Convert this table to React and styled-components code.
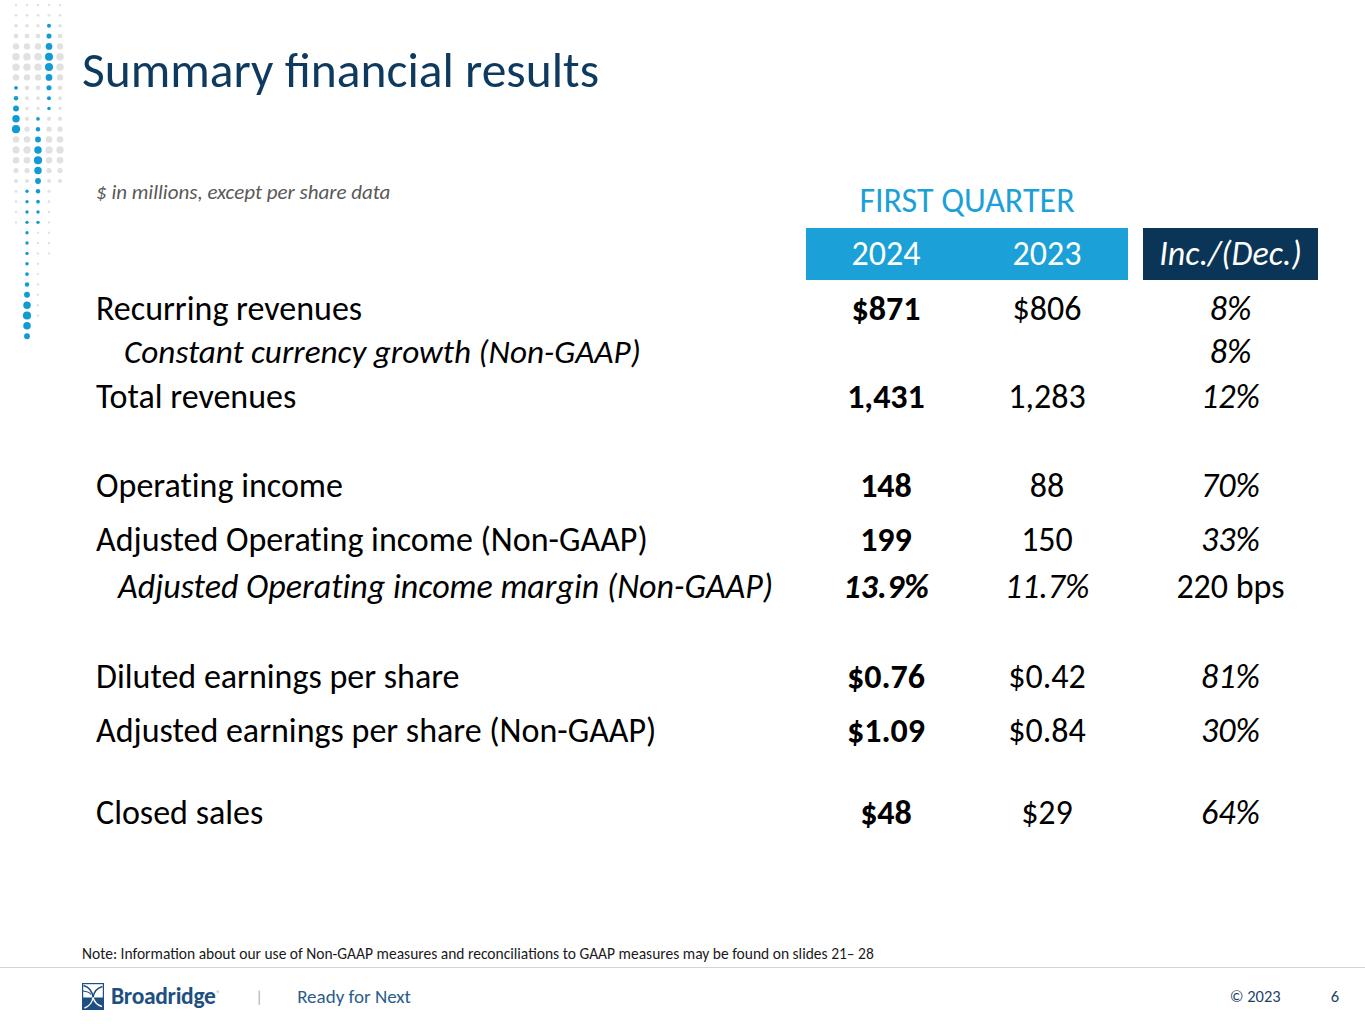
import React from "react";
import styled, { createGlobalStyle } from "styled-components";

const GlobalStyle = createGlobalStyle`
  html, body {
    margin: 0;
    padding: 0;
    background: #fff;
  }
  body {
    font-family: Carlito, Lato, "Open Sans", sans-serif;
    color: #000;
  }
`;

const NAVY = "#0d3a5e";
const BLUE = "#1ba0d8";

// decorative dot column pattern at the top left
const dotColumns = [
  { x: 16, segs: [[0, 7, "g"], [8, 12, "b", 12], [13, 21, "g"]] },
  { x: 27, segs: [[0, 17, "g"], [18, 32, "b", 30]] },
  { x: 38, segs: [[0, 10, "g"], [11, 21, "b", 15], [22, 30, "g"]] },
  { x: 49, segs: [[0, 1, "g"], [2, 10, "b", 5.5], [11, 24, "g"]] },
  { x: 60, segs: [[0, 17, "g"]] },
];

const grayRadius = (i) =>
  1.2 + 2.6 * Math.exp(-((i - 5.5) ** 2) / 8) + 2.4 * Math.exp(-((i - 14) ** 2) / 8);

const blueRadius = (i, peak) => 1.7 + 2.4 * Math.exp(-((i - peak) ** 2) / 6);

const Dots = () => {
  const dots = [];
  dotColumns.forEach((col) => {
    col.segs.forEach(([from, to, kind, peak]) => {
      for (let i = from; i <= to; i++) {
        const y = 5 + i * 10.35;
        const r = kind === "b" ? blueRadius(i, peak) : Math.min(grayRadius(i), 3.8);
        dots.push(
          <circle
            key={`${col.x}-${i}`}
            cx={col.x}
            cy={y}
            r={r}
            fill={kind === "b" ? "#119bd4" : "#e1e1e1"}
          />
        );
      }
    });
  });
  return (
    <svg width="70" height="345" viewBox="0 0 70 345">
      {dots}
    </svg>
  );
};

const BroadridgeMark = () => (
  <svg width="22" height="27" viewBox="0 0 22 27">
    <rect x="0.6" y="0.6" width="20.8" height="25.8" fill="#fff" stroke="#1d4f80" strokeWidth="1.2" />
    <rect x="0" y="14.5" width="22" height="12.5" fill="#1d4f80" />
    <path d="M1.5 2.5 Q10 5, 11 14.5" fill="none" stroke="#1d4f80" strokeWidth="1.5" />
    <path d="M20.5 3.5 Q12 6, 11 14.5" fill="none" stroke="#1d4f80" strokeWidth="1.5" />
    <path d="M1 8 Q7 8.5, 9 11.5" fill="none" stroke="#1d4f80" strokeWidth="1.1" />
    <path d="M11 14.5 Q10 22, 2.5 25" fill="none" stroke="#fff" strokeWidth="1.4" />
    <path d="M11 14.5 Q13 21.5, 20 23.5" fill="none" stroke="#fff" strokeWidth="1.4" />
  </svg>
);

const Slide = styled.div`
  width: 1365px;
  height: 1024px;
  display: flex;
  flex-direction: column;
  overflow: hidden;
  background: #fff;
`;

const Body = styled.div`
  height: 967px;
  display: flex;
`;

const Gutter = styled.div`
  width: 82px;
  flex: none;
  display: flex;
  align-items: flex-start;
`;

const Main = styled.div`
  flex: 1;
  display: flex;
  flex-direction: column;
`;

const Title = styled.h1`
  margin: 40px 0 0;
  font-size: 49.5px;
  line-height: 60px;
  font-weight: 400;
  color: ${NAVY};
`;

const Grid = styled.div`
  display: grid;
  grid-template-columns: 724px 160px 162px 15px 175px;
  align-items: center;
  margin-top: ${(p) => p.$top || 0}px;
  height: ${(p) => p.$h || 40}px;
`;

const Caption = styled.div`
  align-self: start;
  margin-top: 10px;
  padding-left: 14px;
  font-size: 21px;
  line-height: 24px;
  font-style: italic;
  color: #595959;
`;

const QuarterLabel = styled.div`
  grid-column: 2 / 4;
  text-align: center;
  margin-top: 4px;
  font-size: 34px;
  line-height: 38px;
  color: ${BLUE};
`;

const BandBlue = styled.div`
  grid-column: 2 / 4;
  height: 100%;
  display: grid;
  grid-template-columns: 160px 162px;
  align-items: center;
  background: ${BLUE};
`;

const BandDark = styled.div`
  grid-column: 5;
  height: 100%;
  display: flex;
  align-items: center;
  justify-content: center;
  background: #0b3556;
`;

const BandText = styled.span`
  text-align: center;
  font-size: 34px;
  line-height: 40px;
  color: #fff;
  font-style: ${(p) => (p.$italic ? "italic" : "normal")};
`;

const Label = styled.div`
  padding-left: ${(p) => 14 + (p.$indent || 0)}px;
  font-size: ${(p) => p.$size || 34}px;
  line-height: 40px;
  font-style: ${(p) => (p.$italic ? "italic" : "normal")};
  font-variant-ligatures: no-common-ligatures;
  white-space: nowrap;
`;

const Value = styled.div`
  grid-column: ${(p) => p.$col};
  text-align: center;
  font-size: 34px;
  line-height: 40px;
  font-weight: ${(p) => (p.$bold ? 700 : 400)};
  font-style: ${(p) => (p.$italic ? "italic" : "normal")};
  white-space: nowrap;
`;

const Spacer = styled.div`
  flex: 1;
`;

const Note = styled.div`
  margin-bottom: 3px;
  font-size: 15.5px;
  line-height: 20px;
  color: #1a1a1a;
`;

const Footer = styled.footer`
  flex: 1;
  display: flex;
  align-items: center;
  padding: 0 26px 0 82px;
  border-top: 1.5px solid #d4d4d4;
`;

const Brand = styled.div`
  display: flex;
  align-items: center;
  gap: 7px;
  color: #1d4f80;
  font-size: 23.5px;
  font-weight: 700;
  letter-spacing: -0.3px;
`;

const Reg = styled.sup`
  font-size: 6px;
  font-weight: 400;
  margin-left: 1px;
`;

const Divider = styled.span`
  margin: 0 34px 0 36px;
  color: #b5b5b5;
  font-size: 17px;
  font-weight: 300;
`;

const Tagline = styled.span`
  color: #2a5d8a;
  font-size: 19px;
  font-weight: 300;
`;

const FooterRight = styled.div`
  margin-left: auto;
  display: flex;
  gap: 50px;
  color: #1d3f66;
  font-size: 16.5px;
`;

const rows = [
  { label: "Recurring revenues", top: 9, v: ["$871", "$806", "8%"] },
  {
    label: "Constant currency growth (Non-GAAP)",
    top: 3,
    indent: 28,
    italic: true,
    size: 33.2,
    v: ["", "", "8%"],
  },
  { label: "Total revenues", top: 5, v: ["1,431", "1,283", "12%"] },
  { label: "Operating income", top: 49, v: ["148", "88", "70%"] },
  { label: "Adjusted Operating income (Non-GAAP)", top: 14, v: ["199", "150", "33%"] },
  {
    label: "Adjusted Operating income margin (Non-GAAP)",
    top: 7,
    indent: 22,
    italic: true,
    v: ["13.9%", "11.7%", "220 bps"],
    valItalic: true,
    lastPlain: true,
  },
  { label: "Diluted earnings per share", top: 50, v: ["$0.76", "$0.42", "81%"] },
  { label: "Adjusted earnings per share (Non-GAAP)", top: 14, v: ["$1.09", "$0.84", "30%"] },
  { label: "Closed sales", top: 42, v: ["$48", "$29", "64%"] },
];

export default function App() {
  return (
    <>
      <GlobalStyle />
      <Slide>
        <Body>
          <Gutter>
            <Dots />
          </Gutter>
          <Main>
            <Title>Summary financial results</Title>

            <Grid $top={70} $h={58}>
              <Caption>$ in millions, except per share data</Caption>
              <QuarterLabel>FIRST QUARTER</QuarterLabel>
            </Grid>

            <Grid $h={52}>
              <BandBlue>
                <BandText>2024</BandText>
                <BandText>2023</BandText>
              </BandBlue>
              <BandDark>
                <BandText $italic>Inc./(Dec.)</BandText>
              </BandDark>
            </Grid>

            {rows.map((r) => (
              <Grid key={r.label} $top={r.top}>
                <Label $indent={r.indent} $italic={r.italic} $size={r.size}>
                  {r.label}
                </Label>
                <Value $col={2} $bold $italic={r.valItalic}>
                  {r.v[0]}
                </Value>
                <Value $col={3} $italic={r.valItalic}>
                  {r.v[1]}
                </Value>
                <Value $col={5} $italic={!r.lastPlain}>
                  {r.v[2]}
                </Value>
              </Grid>
            ))}

            <Spacer />
            <Note>
              Note: Information about our use of Non-GAAP measures and reconciliations to GAAP measures may be
              found on slides 21– 28
            </Note>
          </Main>
        </Body>
        <Footer>
          <Brand>
            <BroadridgeMark />
            <span>
              Broadridge
              <Reg>®</Reg>
            </span>
          </Brand>
          <Divider>|</Divider>
          <Tagline>Ready for Next</Tagline>
          <FooterRight>
            <span>© 2023</span>
            <span>6</span>
          </FooterRight>
        </Footer>
      </Slide>
    </>
  );
}
